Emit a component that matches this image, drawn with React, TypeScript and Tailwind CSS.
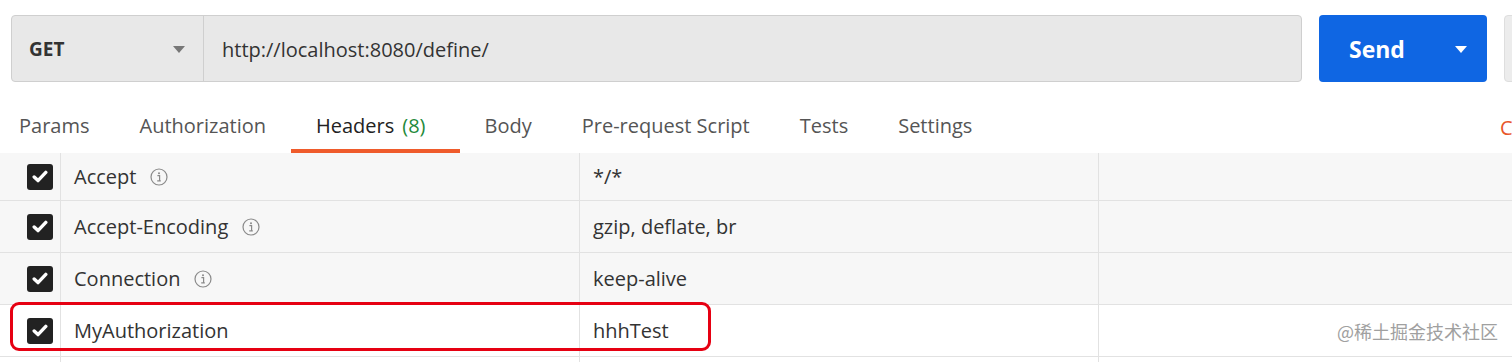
import React from 'react';

const tabs = [
  { label: 'Params' },
  { label: 'Authorization' },
  { label: 'Headers', count: '(8)', active: true },
  { label: 'Body' },
  { label: 'Pre-request Script' },
  { label: 'Tests' },
  { label: 'Settings' },
];

const rows = [
  { key: 'Accept', value: '*/*', info: true },
  { key: 'Accept-Encoding', value: 'gzip, deflate, br', info: true },
  { key: 'Connection', value: 'keep-alive', info: true },
  { key: 'MyAuthorization', value: 'hhhTest', info: false, plain: true },
];

const Caret = ({ className }: { className: string }) => (
  <svg width="12" height="7" viewBox="0 0 12 7" className={className}>
    <path d="M0 0 L12 0 L6 7 Z" fill="currentColor" />
  </svg>
);

const InfoIcon = () => (
  <svg width="18" height="18" viewBox="0 0 18 18" className="text-[#8a8a8a]">
    <circle cx="9" cy="9" r="8" fill="none" stroke="currentColor" strokeWidth="1.2" />
    <circle cx="9" cy="5.3" r="1" fill="currentColor" />
    <path d="M7.4 7.6 H9.6 V12.6 M7.2 12.8 H10.8" fill="none" stroke="currentColor" strokeWidth="1.2" />
  </svg>
);

const Checkbox = () => (
  <div className="w-[26px] h-[26px] rounded-[3px] bg-[#222] flex items-center justify-center">
    <svg width="16" height="13" viewBox="0 0 16 13">
      <path d="M2.2 7 L6 10.6 L13.8 2.4" fill="none" stroke="white" strokeWidth="3.4" strokeLinecap="round" strokeLinejoin="round" />
    </svg>
  </div>
);

export default function App() {
  return (
    <div className="relative w-[1512px] h-[362px] overflow-hidden bg-white font-['Open_Sans',sans-serif]">
      {/* Request bar */}
      <div className="flex pt-[15px] pl-[11px]">
        <div className="flex shrink-0 w-[1291px] h-[67px] rounded-[4px] border border-[#cfcfcf] bg-[#e8e8e8]">
          <div className="flex items-center justify-between w-[192px] border-r border-[#cfcfcf] pl-[17px] pr-[18px] pt-[2px]">
            <span className="text-[19px] font-bold text-[#333]">GET</span>
            <Caret className="text-[#777]" />
          </div>
          <div className="flex items-center pl-[18px] pt-[2px] text-[20px] text-[#333]">
            http://localhost:8080/define/
          </div>
        </div>
        <div className="ml-[17px] shrink-0 flex items-center justify-between w-[168px] h-[67px] rounded-[4px] bg-[#0f66e3] pl-[30px] pr-[20px] pt-[2px]">
          <span className="text-[23px] font-bold text-white">Send</span>
          <Caret className="text-white" />
        </div>
        <div className="ml-[17px] shrink-0 w-[20px] h-[67px] rounded-[4px] border border-[#dedede] bg-[#ececec]" />
      </div>

      {/* Tabs */}
      <div className="flex mt-[18px] h-[53px] ml-[-6px]">
        {tabs.map((t) => (
          <div
            key={t.label}
            className={`flex items-center px-[25px] pt-[2px] border-b-[4px] text-[20px] whitespace-nowrap ${
              t.active ? 'border-[#ef5b2b] text-[#222]' : 'border-transparent text-[#555]'
            }`}
          >
            {t.label}
            {t.count && <span className="ml-[8px] mr-[9px] text-[#1f8a3b]">{t.count}</span>}
          </div>
        ))}
        <div className="flex-1" />
        <div className="w-[12px] flex items-center pt-[2px] text-[20px] text-[#e8562a] whitespace-nowrap">C</div>
      </div>

      {/* Headers table */}
      <div className="flex flex-col">
        {rows.map((r, i) => (
          <div
            key={r.key}
            className={`flex border-b border-[#e2e2e2] ${i === 0 ? 'h-[48px]' : 'h-[52px]'} ${
              r.plain ? 'bg-white' : 'bg-[#f7f7f7]'
            }`}
          >
            <div className="w-[61px] flex items-center pl-[27px] border-r border-[#e2e2e2]">
              <Checkbox />
            </div>
            <div className="w-[519px] flex items-center gap-[14px] pl-[13px] border-r border-[#e2e2e2] text-[20px] text-[#333]">
              {r.key}
              {r.info && <InfoIcon />}
            </div>
            <div className="w-[519px] flex items-center pl-[13px] border-r border-[#e2e2e2] text-[20px] text-[#333]">
              {r.value}
            </div>
            <div className="flex-1" />
          </div>
        ))}
        <div className="flex h-[20px] bg-white">
          <div className="w-[61px] border-r border-[#e2e2e2]" />
          <div className="w-[519px] border-r border-[#e2e2e2]" />
          <div className="w-[519px] border-r border-[#e2e2e2]" />
        </div>
      </div>

      {/* highlight */}
      <div className="absolute left-[10px] top-[302px] w-[701px] h-[49px] rounded-[9px] border-[3px] border-[#e60012]" />

      {/* watermark */}
      <div className="absolute right-[14px] top-[318px] text-[18px] text-[#a0a0a0] font-['Noto_Sans_CJK_SC',sans-serif]">
        @稀土掘金技术社区
      </div>
    </div>
  );
}
